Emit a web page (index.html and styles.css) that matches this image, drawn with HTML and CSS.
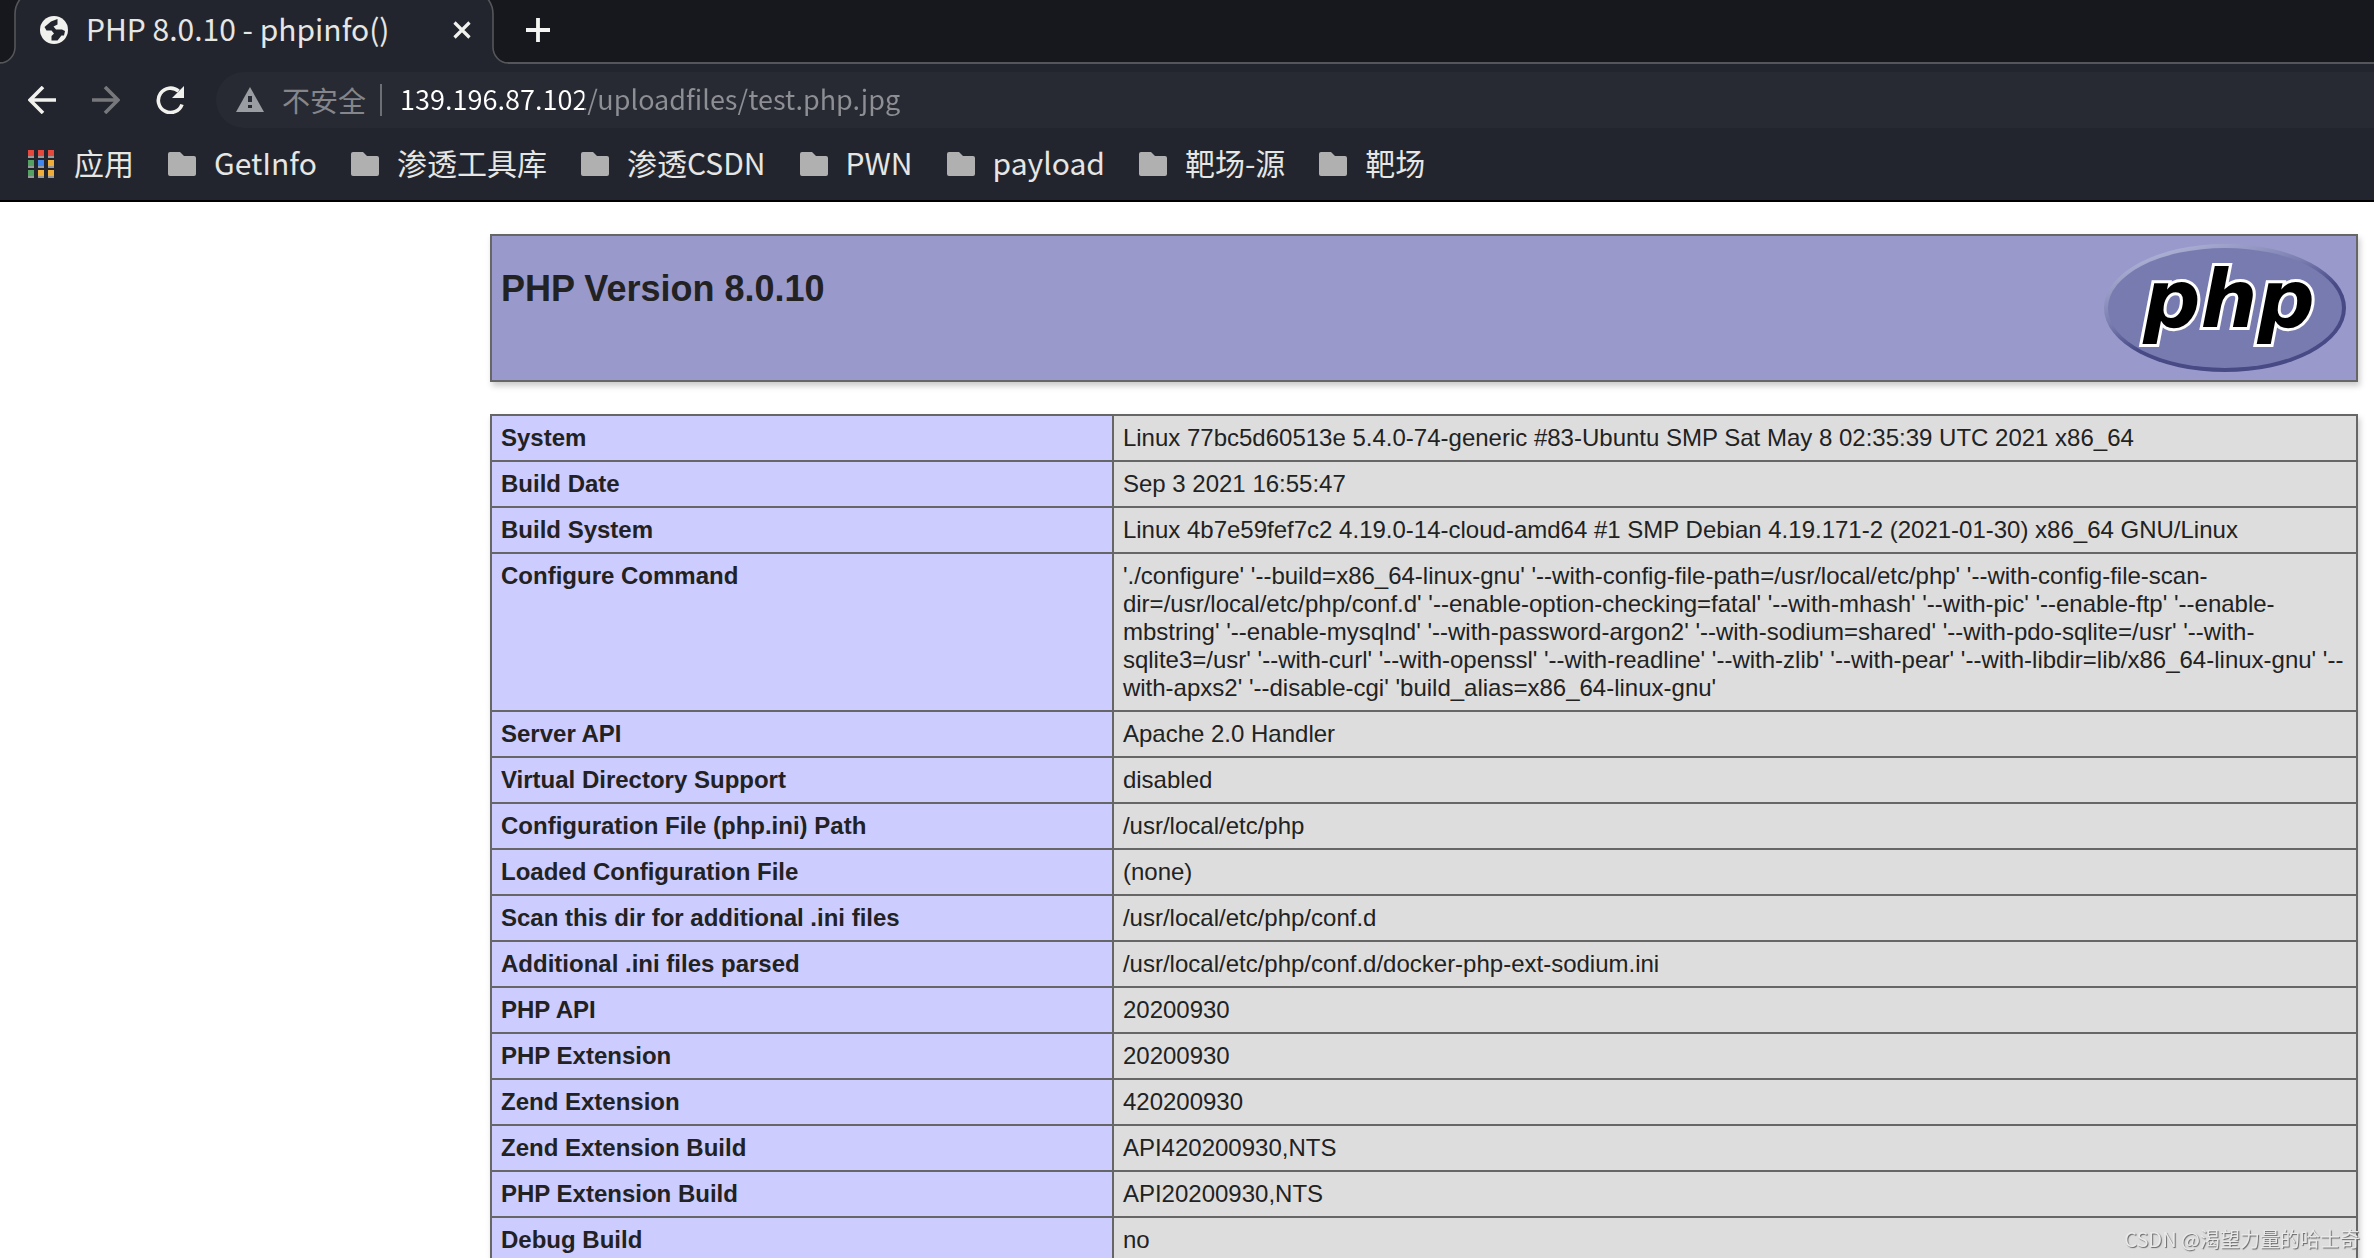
FILE: index.html
```html
<!DOCTYPE html>
<html lang="zh-CN">
<head>
    <meta charset="UTF-8">
    <meta name="viewport" content="width=device-width, initial-scale=1.0">
    <title>PHP 8.0.10 - phpinfo()</title>
    <link rel="stylesheet" href="styles.css">
</head>
<body>

    <header class="browser">
        <div class="tab-strip">
            <div class="tab">
                <svg class="tab-shape" viewBox="0 0 508 64" aria-hidden="true">
                    <path d="M0 63A15 16 0 0 0 15 47V14Q15 5 21-2H487Q493 5 493 14V47A15 16 0 0 0 508 63V64H0Z" fill="#22252d"/>
                    <path d="M0 63A15 16 0 0 0 15 47V14Q15 5 21-2M487-2Q493 5 493 14V47A15 16 0 0 0 508 63" fill="none" stroke="#55565a" stroke-width="1.6"/>
                </svg>
                <svg class="icon" viewBox="0 0 28 28" aria-hidden="true">
                    <circle cx="14" cy="14" r="14" fill="#f1f1ee"/>
                    <path d="M17.5 3L11 5.5L4.5 11L6.5 14.5L11.5 14.5L14 17.5L11.5 20L11.5 24.5L17.5 24.5L21.5 19.5H24L25 15L22 13.5H16L13.5 10.5L17.5 8.5Z" fill="#22252d"/>
                </svg>
                <span class="tab-title">PHP 8.0.10 - phpinfo()</span>
                <button class="tool" type="button" aria-label="Close tab">
                    <svg class="icon" viewBox="0 0 28 28"><path d="M6.5 6.5L21.5 21.5M21.5 6.5L6.5 21.5" fill="none" stroke="#f1f1ee" stroke-width="3.2"/></svg>
                </button>
            </div>
            <button class="tool" type="button" aria-label="New tab">
                <svg class="icon" viewBox="0 0 28 28"><path d="M14 2V26M2 14H26" fill="none" stroke="#f5f5f3" stroke-width="3.8"/></svg>
            </button>
        </div>

        <div class="toolbar">
            <button class="tool" type="button" aria-label="Back">
                <svg class="icon" viewBox="0 0 28 28"><path d="M28 14H3M15 1L2 14L15 27" fill="none" stroke="#f1f1ee" stroke-width="3.6"/></svg>
            </button>
            <button class="tool" type="button" aria-label="Forward" disabled>
                <svg class="icon" viewBox="0 0 28 28"><path d="M0 14H25M13 1L26 14L13 27" fill="none" stroke="#77787b" stroke-width="3.6"/></svg>
            </button>
            <button class="tool" type="button" aria-label="Reload">
                <svg class="icon" viewBox="0 0 28 28">
                    <path d="M26 18.5A12.2 12.2 0 1 1 22.6 5.2" fill="none" stroke="#f1f1ee" stroke-width="3.6"/>
                    <path d="M28 0V12H16Z" fill="#f1f1ee"/>
                </svg>
            </button>
            <div class="omnibox">
                <svg class="icon" viewBox="0 0 28 28" aria-hidden="true">
                    <path d="M14 1L28 26H0Z" fill="#9a9da2"/>
                    <path d="M14 10V16M14 19V22" stroke="#282a33" stroke-width="4"/>
                </svg>
                <label class="security" for="address">不安全</label>
                <input class="address" id="address" type="text" value="139.196.87.102/uploadfiles/test.php.jpg" spellcheck="false">
            </div>
        </div>

        <nav class="bookmarks">
            <a href="#">
                <svg class="icon" viewBox="0 0 28 28" aria-hidden="true">
                    <path d="M0 6h6v2H0zM10 6h6v2h-6zM20 6h6v2h-6zM0 16h6v2H0zM10 16h6v2h-6zM20 16h6v2h-6zM0 26h6v2H0zM10 26h6v2h-6zM20 26h6v2h-6z" fill="#9a9a9a"/>
                    <path d="M0 0h6v6H0zM10 0h6v6h-6zM20 0h6v6h-6z" fill="#e5493d"/>
                    <path d="M0 10h6v6H0zM0 20h6v6H0z" fill="#55a063"/>
                    <path d="M10 10h6v6h-6z" fill="#4287ee"/>
                    <path d="M20 10h6v6h-6zM10 20h6v6h-6zM20 20h6v6h-6z" fill="#efad3c"/>
                </svg>
                <span>应用</span>
            </a>
            <a href="#"><svg class="icon" viewBox="0 0 28 28" aria-hidden="true"><use href="#folder"/></svg><span>GetInfo</span></a>
            <a href="#"><svg class="icon" viewBox="0 0 28 28" aria-hidden="true"><use href="#folder"/></svg><span>渗透工具库</span></a>
            <a href="#"><svg class="icon" viewBox="0 0 28 28" aria-hidden="true"><use href="#folder"/></svg><span>渗透CSDN</span></a>
            <a href="#"><svg class="icon" viewBox="0 0 28 28" aria-hidden="true"><use href="#folder"/></svg><span>PWN</span></a>
            <a href="#"><svg class="icon" viewBox="0 0 28 28" aria-hidden="true"><use href="#folder"/></svg><span>payload</span></a>
            <a href="#"><svg class="icon" viewBox="0 0 28 28" aria-hidden="true"><use href="#folder"/></svg><span>靶场-源</span></a>
            <a href="#"><svg class="icon" viewBox="0 0 28 28" aria-hidden="true"><use href="#folder"/></svg><span>靶场</span></a>
        </nav>
        <svg class="defs" aria-hidden="true">
            <symbol id="folder" viewBox="0 0 28 28"><path d="M2 2H12L16 6H26Q28 6 28 8V24Q28 26 26 26H2Q0 26 0 24V4Q0 2 2 2Z" fill="#b0b0b0"/></symbol>
        </svg>
    </header>

    <main class="center">
        <div class="version">
            <h1>PHP Version 8.0.10</h1>
            <a href="http://www.php.net/">
                <svg class="logo" viewBox="0 0 242 128" role="img" aria-label="PHP logo">
                    <defs>
                        <linearGradient id="rim" x1="0.3" y1="0" x2="0.8" y2="0.8">
                            <stop offset="0" stop-color="#aeb2d5"/>
                            <stop offset="0.4" stop-color="#7a7eb0"/>
                            <stop offset="0.65" stop-color="#484a86"/>
                        </linearGradient>
                    </defs>
                    <ellipse cx="121" cy="64" rx="121" ry="64" fill="url(#rim)"/>
                    <ellipse cx="121" cy="64" rx="117" ry="60" fill="#777bb0"/>
                    <text class="logo-text" x="125" y="83" text-anchor="middle">php</text>
                </svg>
            </a>
        </div>

        <table>
            <tr><th scope="row">System</th><td>Linux 77bc5d60513e 5.4.0-74-generic #83-Ubuntu SMP Sat May 8 02:35:39 UTC 2021 x86_64</td></tr>
            <tr><th scope="row">Build Date</th><td>Sep 3 2021 16:55:47</td></tr>
            <tr><th scope="row">Build System</th><td>Linux 4b7e59fef7c2 4.19.0-14-cloud-amd64 #1 SMP Debian 4.19.171-2 (2021-01-30) x86_64 GNU/Linux</td></tr>
            <tr><th scope="row">Configure Command</th><td>'./configure' '--build=x86_64-linux-gnu' '--with-config-file-path=/usr/local/etc/php' '--with-config-file-scan-dir=/usr/local/etc/php/conf.d' '--enable-option-checking=fatal' '--with-mhash' '--with-pic' '--enable-ftp' '--enable-mbstring' '--enable-mysqlnd' '--with-password-argon2' '--with-sodium=shared' '--with-pdo-sqlite=/usr' '--with-sqlite3=/usr' '--with-curl' '--with-openssl' '--with-readline' '--with-zlib' '--with-pear' '--with-libdir=lib/x86_64-linux-gnu' '--with-apxs2' '--disable-cgi' 'build_alias=x86_64-linux-gnu'</td></tr>
            <tr><th scope="row">Server API</th><td>Apache 2.0 Handler</td></tr>
            <tr><th scope="row">Virtual Directory Support</th><td>disabled</td></tr>
            <tr><th scope="row">Configuration File (php.ini) Path</th><td>/usr/local/etc/php</td></tr>
            <tr><th scope="row">Loaded Configuration File</th><td>(none)</td></tr>
            <tr><th scope="row">Scan this dir for additional .ini files</th><td>/usr/local/etc/php/conf.d</td></tr>
            <tr><th scope="row">Additional .ini files parsed</th><td>/usr/local/etc/php/conf.d/docker-php-ext-sodium.ini</td></tr>
            <tr><th scope="row">PHP API</th><td>20200930</td></tr>
            <tr><th scope="row">PHP Extension</th><td>20200930</td></tr>
            <tr><th scope="row">Zend Extension</th><td>420200930</td></tr>
            <tr><th scope="row">Zend Extension Build</th><td>API420200930,NTS</td></tr>
            <tr><th scope="row">PHP Extension Build</th><td>API20200930,NTS</td></tr>
            <tr><th scope="row">Debug Build</th><td>no</td></tr>
        </table>
    </main>

    <div class="watermark">CSDN @渴望力量的哈士奇</div>

</body>
</html>
```
FILE: styles.css
```css
* {
    box-sizing: border-box;
}

body {
    margin: 0;
    height: 100vh;
    overflow: hidden;
    background: #fff;
    color: #222;
    font-family: "Liberation Sans", Arial, sans-serif;
}

/* Browser chrome */
.browser {
    background: #22252d;
    border-bottom: 2px solid #000;
    color: #e6e6e4;
    font-family: "Noto Sans CJK SC", sans-serif;
    font-size: 30px;
    line-height: 40px;
}

.icon {
    display: block;
    flex: none;
    width: 28px;
    height: 28px;
}

.defs {
    display: none;
}

.tool {
    padding: 0;
    border: none;
    background: none;
}

/* Tabs */
.tab-strip {
    display: flex;
    align-items: center;
    gap: 16px;
    height: 64px;
    padding-bottom: 4px;
    background: linear-gradient(#17181d, #17181d 62px, #55565a 62px);
}

.tab {
    position: relative;
    display: flex;
    align-items: center;
    gap: 18px;
    width: 508px;
    height: 60px;
    padding: 0 32px 0 40px;
}

.tab-shape {
    position: absolute;
    top: 0;
    left: 0;
    width: 508px;
    height: 64px;
}

.tab > * {
    z-index: 1;
}

.tab > .tab-shape {
    z-index: 0;
}

.tab-title {
    flex: 1;
    padding-bottom: 4px;
}

/* Address row */
.toolbar {
    display: flex;
    align-items: center;
    gap: 36px;
    padding: 8px 0 8px 28px;
}

.omnibox {
    display: flex;
    flex: 1;
    align-items: center;
    height: 56px;
    margin-left: -4px;
    padding-left: 20px;
    border-radius: 28px 0 0 28px;
    background: #282a33;
    font-size: 28px;
}

.security {
    margin-left: 18px;
    padding-right: 14px;
    border-right: 2px solid #6d6f75;
    color: #84868c;
    line-height: 32px;
}

/* Host in white, path in grey */
.address {
    flex: 1;
    height: 40px;
    padding: 0 0 2px 18px;
    border: none;
    outline: none;
    background: linear-gradient(90deg, #fff 202px, #8d8f94 202px);
    background-clip: text;
    -webkit-background-clip: text;
    color: transparent;
    font: inherit;
    font-size: 27px;
}

/* Bookmarks bar */
.bookmarks {
    display: flex;
    gap: 34px;
    padding: 8px 28px 16px;
}

.bookmarks a {
    display: flex;
    align-items: center;
    gap: 18px;
    height: 40px;
    color: inherit;
    text-decoration: none;
    white-space: nowrap;
}

.bookmarks span {
    padding-bottom: 4px;
}

/* phpinfo page */
.center {
    padding: 32px 16px 0 490px;
}

.version {
    display: flex;
    justify-content: space-between;
    margin-bottom: 32px;
    padding: 8px 10px 8px 9px;
    border: 2px solid #666;
    background: #99c;
    box-shadow: 2px 4px 6px #ccc;
}

h1 {
    margin: 24px 0;
    font-size: 36px;
    line-height: 42px;
}

.logo {
    display: block;
    width: 242px;
    height: 128px;
}

.logo-text {
    fill: #000;
    stroke: #fff;
    stroke-width: 6px;
    paint-order: stroke;
    font: italic bold 80px "DejaVu Sans", sans-serif;
}

table {
    width: 100%;
    border-collapse: collapse;
    box-shadow: 2px 4px 6px #ccc;
    font-size: 24px;
    line-height: 28px;
}

th,
td {
    padding: 8px 9px;
    border: 2px solid #666;
    text-align: left;
    vertical-align: top;
}

th {
    width: 33.33%;
    background: #ccf;
}

td {
    background: #ddd;
}

/* Corner watermark */
.watermark {
    position: fixed;
    right: 14px;
    bottom: 5px;
    color: #e9e9e9;
    font-family: "Noto Sans CJK SC", sans-serif;
    font-size: 20px;
    line-height: 28px;
    text-shadow: 1px 1px 1px #666;
}
```
